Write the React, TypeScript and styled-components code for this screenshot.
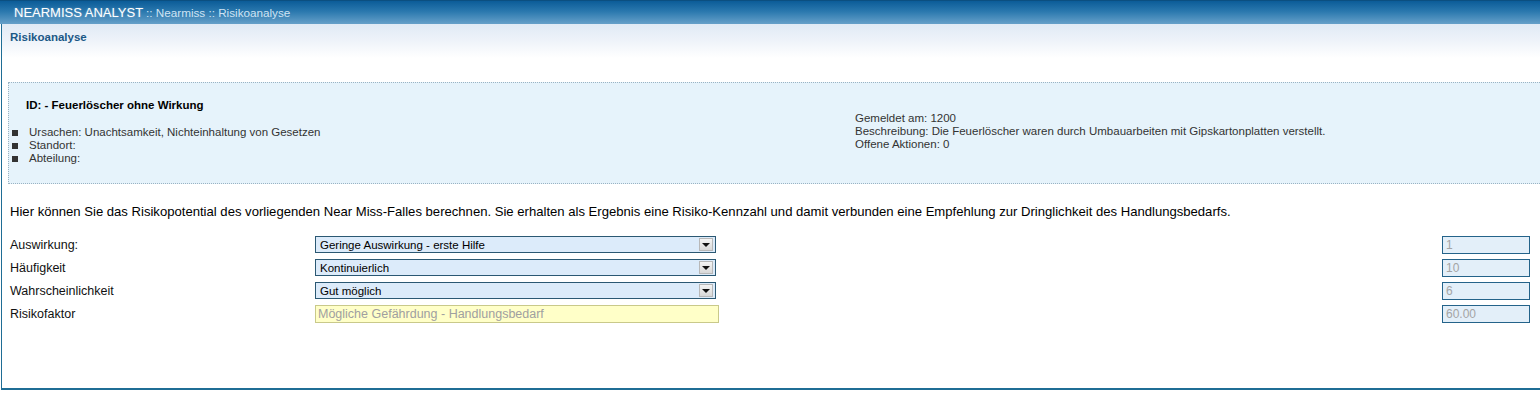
import styled, { createGlobalStyle } from 'styled-components';

const GlobalStyle = createGlobalStyle`
	html, body {
		margin: 0;
		padding: 0;
		background: #ffffff;
	}
	body {
		font-family: 'Liberation Sans', Arial, sans-serif;
		font-size: 12px;
		color: #000;
	}
`;

const Frame = styled.div`
	margin-left: 1px;
	height: 366px;
	border-left: 1px solid #1f6d95;
	border-bottom: 2px solid #1f6d95;
	box-sizing: border-box;
	display: flex;
	flex-direction: column;
`;

const TopBar = styled.div`
	height: 24px;
	box-sizing: border-box;
	border-top: 1px solid #0b4f80;
	background: linear-gradient(to bottom, #0b5c98 0%, #2a78ae 45%, #66a0c9 100%);
	display: flex;
	align-items: center;
	padding-left: 14px;
	white-space: nowrap;
`;

const AppName = styled.span`
	color: #ffffff;
	font-size: 13px;
	text-shadow: 0 0 2px rgba(255, 255, 255, 0.35);
`;

const Crumbs = styled.span`
	color: #cfe3f3;
	font-size: 11.7px;
	margin-left: 3px;
`;

const TitleBand = styled.div`
	height: 34px;
	background: linear-gradient(to bottom, #e0eaf5 0%, #edf2f9 45%, #ffffff 100%);
	padding: 7px 0 0 8px;
	box-sizing: border-box;
`;

const PageTitle = styled.div`
	color: #1b5886;
	font-weight: bold;
	font-size: 11.5px;
`;

const InfoBox = styled.div`
	margin: 24px 0 0 6px;
	height: 102px;
	box-sizing: border-box;
	background: #e6f3fb;
	border-top: 1px dotted #9ab3c3;
	border-bottom: 1px dotted #9ab3c3;
	border-left: 1px dotted #9ab3c3;
	display: grid;
	grid-template-columns: 846px 1fr;
	color: #333;
	font-size: 11.5px;
`;

const InfoLeft = styled.div`
	padding-top: 15px;
`;

const InfoTitle = styled.div`
	margin-left: 17px;
	font-weight: bold;
	color: #000;
	line-height: 14px;
`;

const InfoList = styled.ul`
	list-style: none;
	margin: 14px 0 0 0;
	padding: 0;
`;

const InfoItem = styled.li`
	display: flex;
	align-items: center;
	line-height: 13px;

	&::before {
		content: '';
		width: 6px;
		height: 6px;
		background: #333;
		margin: 0 11px 0 3px;
	}
`;

const InfoRight = styled.div`
	padding-top: 29px;
`;

const InfoLine = styled.div`
	line-height: 13px;
`;

const Intro = styled.p`
	margin: 20px 0 0 8px;
	line-height: 15px;
	font-size: 13.1px;
`;

const Form = styled.div`
	margin: 14px 10px 0 8px;
	display: grid;
	grid-template-columns: 305px 405px 1fr 88px;
	grid-auto-rows: 23px;
	align-items: center;
`;

const Label = styled.div`
	font-size: 12.5px;
	color: #111;
`;

const SelectBox = styled.div`
	height: 17px;
	width: 401px;
	box-sizing: border-box;
	border: 1px solid #2b5873;
	background: #dcebfa;
	display: flex;
	align-items: center;
	justify-content: space-between;
	padding-left: 4px;
	font-size: 11.5px;
	color: #000;
`;

const ArrowButton = styled.div`
	width: 14px;
	height: 13px;
	margin-right: 2px;
	box-sizing: border-box;
	border: 1px solid #b8b8b8;
	background: linear-gradient(to bottom, #f4f4f4, #d8d8d8);
	display: flex;
	align-items: center;
	justify-content: center;

	&::after {
		content: '';
		border-left: 4px solid transparent;
		border-right: 4px solid transparent;
		border-top: 4px solid #111;
	}
`;

const ResultField = styled.div`
	height: 18px;
	width: 404px;
	box-sizing: border-box;
	border: 1px solid #c9c98a;
	background: #ffffc8;
	padding-left: 2px;
	display: flex;
	align-items: center;
	font-size: 12.5px;
	color: #a0a0a0;
	white-space: nowrap;
`;

const ValueField = styled.div`
	grid-column: 4;
	height: 18px;
	box-sizing: border-box;
	border: 1px solid #24638a;
	background: #e3eff9;
	padding-left: 3px;
	display: flex;
	align-items: center;
	font-size: 12px;
	color: #a4a4a4;
`;

const rows = [
	{ label: 'Auswirkung:', value: 'Geringe Auswirkung - erste Hilfe', score: '1' },
	{ label: 'Häufigkeit', value: 'Kontinuierlich', score: '10' },
	{ label: 'Wahrscheinlichkeit', value: 'Gut möglich', score: '6' },
];

function App() {
	return (
		<>
			<GlobalStyle />
			<TopBar>
				<AppName>NEARMISS ANALYST</AppName>
				<Crumbs>:: Nearmiss :: Risikoanalyse</Crumbs>
			</TopBar>
			<Frame>
				<TitleBand>
					<PageTitle>Risikoanalyse</PageTitle>
				</TitleBand>

				<InfoBox>
					<InfoLeft>
						<InfoTitle>ID: - Feuerlöscher ohne Wirkung</InfoTitle>
						<InfoList>
							<InfoItem>Ursachen: Unachtsamkeit, Nichteinhaltung von Gesetzen</InfoItem>
							<InfoItem>Standort:</InfoItem>
							<InfoItem>Abteilung:</InfoItem>
						</InfoList>
					</InfoLeft>
					<InfoRight>
						<InfoLine>Gemeldet am: 1200</InfoLine>
						<InfoLine>Beschreibung: Die Feuerlöscher waren durch Umbauarbeiten mit Gipskartonplatten verstellt.</InfoLine>
						<InfoLine>Offene Aktionen: 0</InfoLine>
					</InfoRight>
				</InfoBox>

				<Intro>
					Hier können Sie das Risikopotential des vorliegenden Near Miss-Falles berechnen. Sie erhalten als Ergebnis eine
					Risiko-Kennzahl und damit verbunden eine Empfehlung zur Dringlichkeit des Handlungsbedarfs.
				</Intro>

				<Form>
					{rows.map((row) => (
						<>
							<Label key={row.label}>{row.label}</Label>
							<SelectBox>
								{row.value}
								<ArrowButton />
							</SelectBox>
							<ValueField>{row.score}</ValueField>
						</>
					))}
					<Label>Risikofaktor</Label>
					<ResultField>Mögliche Gefährdung - Handlungsbedarf</ResultField>
					<ValueField>60.00</ValueField>
				</Form>
			</Frame>
		</>
	);
}

export default App;
